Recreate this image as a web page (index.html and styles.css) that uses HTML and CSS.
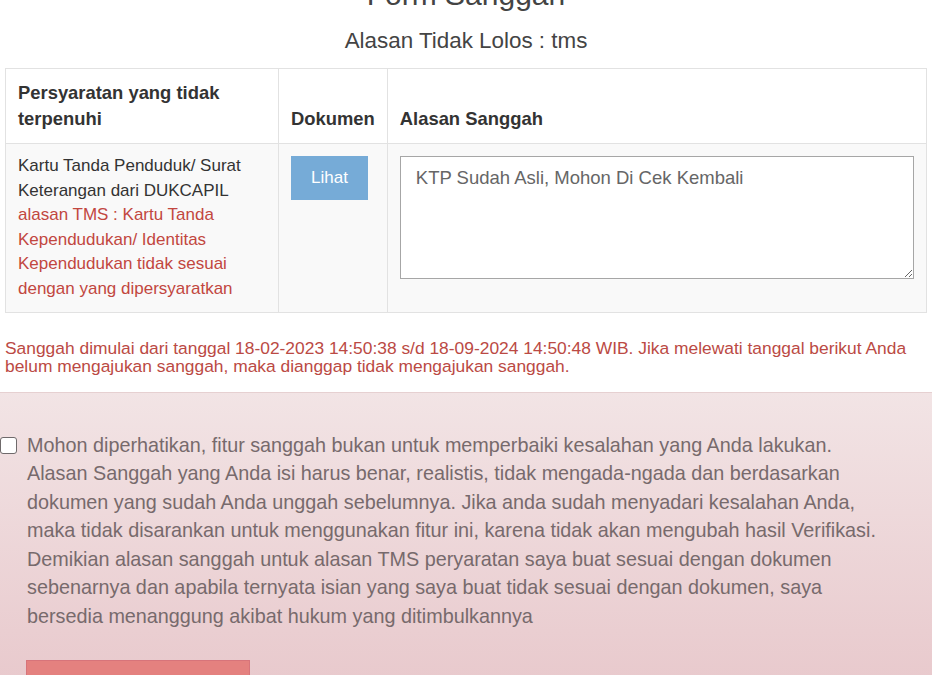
FILE: index.html
```html
<!DOCTYPE html>
<html lang="id">
<head>
    <meta charset="UTF-8">
    <meta name="viewport" content="width=device-width, initial-scale=1.0">
    <title>Form Sanggah</title>
    <link rel="stylesheet" href="styles.css">
</head>
<body>
    <div class="content">
        <h2 class="page-title">Form Sanggah</h2>
        <h4 class="page-subtitle">Alasan Tidak Lolos : tms</h4>

        <!-- Tabel persyaratan -->
        <table class="table-sanggah">
            <thead>
                <tr>
                    <th class="col-syarat">Persyaratan yang tidak terpenuhi</th>
                    <th class="col-dok">Dokumen</th>
                    <th>Alasan Sanggah</th>
                </tr>
            </thead>
            <tbody>
                <tr>
                    <td>
                        Kartu Tanda Penduduk/ Surat Keterangan dari DUKCAPIL
                        <span class="text-tms">alasan TMS : Kartu Tanda Kependudukan/ Identitas Kependudukan tidak sesuai dengan yang dipersyaratkan</span>
                    </td>
                    <td><button class="btn btn-lihat" disabled>Lihat</button></td>
                    <td><textarea class="input-alasan">KTP Sudah Asli, Mohon Di Cek Kembali</textarea></td>
                </tr>
            </tbody>
        </table>

        <p class="notice">Sanggah dimulai dari tanggal 18-02-2023 14:50:38 s/d 18-09-2024 14:50:48 WIB. Jika melewati tanggal berikut Anda belum mengajukan sanggah, maka dianggap tidak mengajukan sanggah.</p>
    </div>

    <!-- Pernyataan -->
    <div class="alert-box">
        <label class="check-label">
            <input type="checkbox" class="check">
            <span>Mohon diperhatikan, fitur sanggah bukan untuk memperbaiki kesalahan yang Anda lakukan. Alasan Sanggah yang Anda isi harus benar, realistis, tidak mengada-ngada dan berdasarkan dokumen yang sudah Anda unggah sebelumnya. Jika anda sudah menyadari kesalahan Anda, maka tidak disarankan untuk menggunakan fitur ini, karena tidak akan mengubah hasil Verifikasi. Demikian alasan sanggah untuk alasan TMS peryaratan saya buat sesuai dengan dokumen sebenarnya dan apabila ternyata isian yang saya buat tidak sesuai dengan dokumen, saya bersedia menanggung akibat hukum yang ditimbulkannya</span>
        </label>
        <button class="btn btn-kirim" disabled>Simpan Sanggah</button>
    </div>
</body>
</html>
```

FILE: styles.css
```css
/* Umum */
body {
    font-family: "Liberation Sans", Arial, sans-serif;
    margin: 0;
    padding: 0;
    color: #333;
    background-color: #fff;
    overflow: hidden;
}

.content {
    padding: 0 5px;
}

.page-title {
    font-size: 30px;
    line-height: 33px;
    font-weight: normal;
    text-align: center;
    color: #444;
    margin: -22px 0 0;
}

.page-subtitle {
    font-size: 22.4px;
    line-height: 24px;
    font-weight: normal;
    text-align: center;
    color: #444;
    margin: 18px 0 15px;
}

/* Tabel */
.table-sanggah {
    width: 100%;
    border-collapse: collapse;
    border: 1px solid #e2e2e2;
}

.table-sanggah th,
.table-sanggah td {
    border: 1px solid #e2e2e2;
    text-align: left;
}

.table-sanggah th {
    font-size: 18.4px;
    line-height: 26px;
    font-weight: bold;
    padding: 11px 12px;
    vertical-align: bottom;
    background-color: #fff;
}

.table-sanggah td {
    font-size: 17px;
    line-height: 24.6px;
    padding: 10px 12px;
    vertical-align: top;
    background-color: #f9f9f9;
}

.col-syarat {
    width: 248px;
}

.col-dok {
    width: 83px;
}

.text-tms {
    color: #c2473f;
}

.btn {
    font-family: inherit;
    cursor: pointer;
}

.btn-lihat {
    display: block;
    margin-top: 2px;
    padding: 10px 20px;
    font-size: 17px;
    line-height: 24px;
    color: #fff;
    background-color: #76abd7;
    border: none;
}

.input-alasan {
    display: block;
    box-sizing: border-box;
    width: 100%;
    height: 123px;
    margin-top: 2px;
    padding: 9px 15px;
    font-family: inherit;
    font-size: 18.5px;
    line-height: 24px;
    color: #666;
    background-color: #fff;
    border: 1px solid #a6a6a6;
    border-radius: 0;
    resize: vertical;
}

.notice {
    font-size: 17.4px;
    line-height: 18px;
    color: #bb4a44;
    margin: 26px 0 17px;
}

/* Kotak pernyataan */
.alert-box {
    height: 320px;
    padding: 38px 48px 0 0;
    border-top: 1px solid #e6d0d1;
    background-image: linear-gradient(to bottom, #f2e4e5 0, #e6c3c7 100%);
}

.check-label {
    display: flex;
    gap: 10px;
    align-items: flex-start;
    font-size: 19.8px;
    line-height: 28.5px;
    color: #776a6c;
}

.check {
    -webkit-appearance: none;
    appearance: none;
    flex: none;
    box-sizing: border-box;
    width: 17px;
    height: 17px;
    margin: 6px 0 0;
    background-color: #fff;
    border: 1.5px solid #6f6a6b;
    border-radius: 3px;
}

.btn-kirim {
    display: block;
    width: 224px;
    margin: 30px 0 0 26px;
    padding: 20px 10px;
    font-size: 17px;
    color: #fff;
    background-color: #e4817f;
    border: 1px solid #d7747a;
}
```
